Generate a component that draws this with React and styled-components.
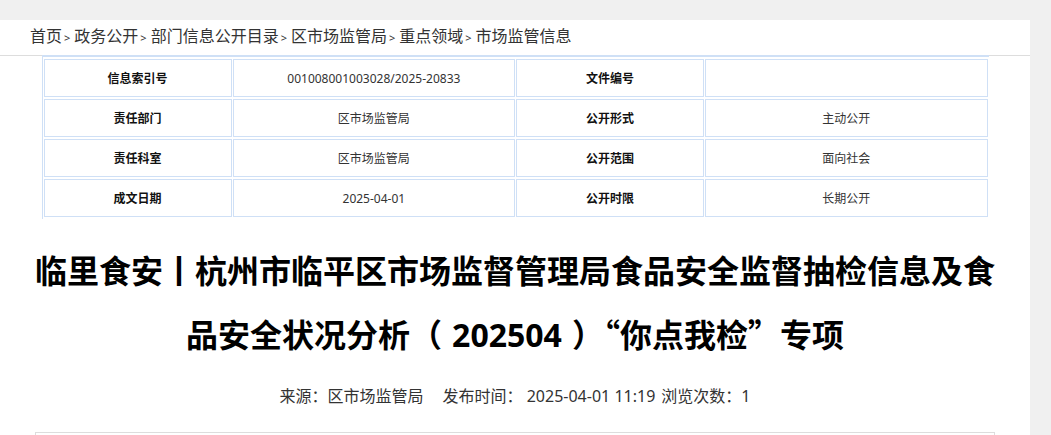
import React from "react";
import styled, { createGlobalStyle } from "styled-components";

const GlobalStyle = createGlobalStyle`
  html, body {
    margin: 0;
    padding: 0;
    background: #f0f0f0;
    font-family: "Noto Sans", "Noto Sans CJK SC", sans-serif;
  }
`;

const crumbs = ["首页", "政务公开", "部门信息公开目录", "区市场监管局", "重点领域", "市场监管信息"];

const rows = [
  ["信息索引号", "001008001003028/2025-20833", "文件编号", ""],
  ["责任部门", "区市场监管局", "公开形式", "主动公开"],
  ["责任科室", "区市场监管局", "公开范围", "面向社会"],
  ["成文日期", "2025-04-01", "公开时限", "长期公开"],
];

export default function App() {
  return (
    <>
      <GlobalStyle />
      <Page>
        <Crumbs>
          {crumbs.map((c, i) => (
            <React.Fragment key={c}>
              <a>{c}</a>
              {i < crumbs.length - 1 && <Sep>&gt;</Sep>}
            </React.Fragment>
          ))}
        </Crumbs>
        <InfoTable>
          <colgroup>
            <col style={{ width: "20%" }} />
            <col style={{ width: "30%" }} />
            <col style={{ width: "20%" }} />
            <col style={{ width: "30%" }} />
          </colgroup>
          <tbody>
            {rows.map((r) => (
              <tr key={r[0]}>
                <Cell $label>{r[0]}</Cell>
                <Cell>{r[1]}</Cell>
                <Cell $label>{r[2]}</Cell>
                <Cell>{r[3]}</Cell>
              </tr>
            ))}
          </tbody>
        </InfoTable>
        <Title>
          临里食安丨杭州市临平区市场监督管理局食品安全监督抽检信息及食品安全状况分析（<Num>202504</Num>）“你点我检”专项
        </Title>
        <Meta>
          <span>来源：区市场监管局</span>
          <span>发布时间： 2025-04-01 11:19</span>
          <span>浏览次数：1</span>
        </Meta>
        <Content />
      </Page>
    </>
  );
}

const Page = styled.div`
  width: 1030px;
  margin-top: 20px;
  background: #fff;
  min-height: 420px;
  overflow: hidden;
`;

const Crumbs = styled.div`
  height: 35px;
  line-height: 32px;
  padding-left: 30px;
  border-bottom: 1px solid #ddd;
  font-size: 16px;
  color: #333;
  white-space: nowrap;

  a {
    color: #333;
    text-decoration: none;
  }
`;

const Sep = styled.span`
  font-size: 11px;
  margin: 0 4px 0 2px;
`;

const InfoTable = styled.table`
  width: 947px;
  margin: -1px auto 0;
  table-layout: fixed;
  border-collapse: separate;
  border-spacing: 1px 2px;
  border-top: 2px solid #cfe0f6;
  border-left: 1px solid #cfe0f6;
`;

const Cell = styled.td`
  height: 36px;
  padding: 0;
  border: 1px solid #cfe0f6;
  text-align: center;
  font-size: 12px;
  color: ${(p) => (p.$label ? "#111" : "#333")};
  font-weight: ${(p) => (p.$label ? 700 : 400)};
`;

const Title = styled.h1`
  margin: 18px 30px 0;
  font-size: 32px;
  line-height: 64px;
  font-weight: 700;
  text-align: center;
  color: #000;
  font-family: "Noto Sans CJK SC", sans-serif;
`;

const Num = styled.span`
  font-family: "Noto Sans", sans-serif;
  margin: 0 10px;
`;

const Meta = styled.div`
  margin-top: 14px;
  line-height: 30px;
  font-size: 16px;
  color: #333;
  text-align: center;

  span + span {
    margin-left: 19px;
  }
  span:last-child {
    margin-left: 6px;
  }
`;

const Content = styled.div`
  width: 958px;
  height: 200px;
  margin: 21px auto 0;
  border: 1px solid #ddd;
`;
